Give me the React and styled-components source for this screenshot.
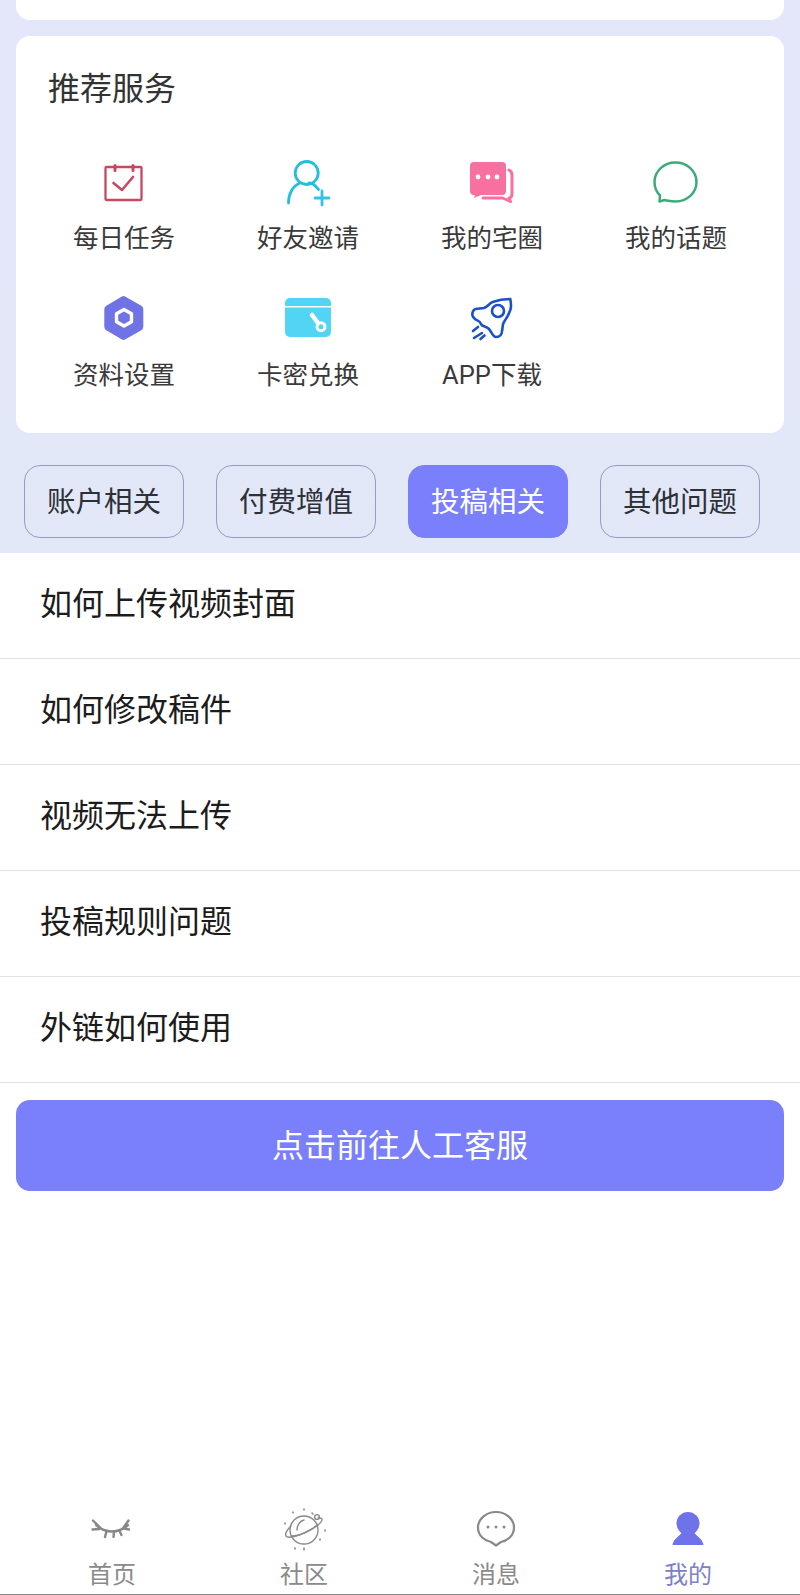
import React from 'react';
import styled, { createGlobalStyle } from 'styled-components';

const Global = createGlobalStyle`
  html, body { margin: 0; padding: 0; background: #fff; }
  * { box-sizing: border-box; }
  body { font-family: Roboto, "Noto Sans CJK SC", "Noto Sans", sans-serif; }
`;
const Page = styled.div`
  width: 800px; height: 1595px; display: flex; flex-direction: column; background: #fff; overflow: hidden;
`;
const Lavender = styled.section`
  background: linear-gradient(180deg, #e4e6fa 0%, #e2e8f7 100%);
  padding: 0 16px 15px; display: flex; flex-direction: column;
`;
const TopCard = styled.div`
  height: 20px; background: #fff; border-radius: 0 0 14px 14px; margin-bottom: 16px;
`;
const Card = styled.div`
  background: #fff; border-radius: 14px; height: 397px; padding: 33px 16px 0;
`;
const CardTitle = styled.h2`
  margin: 0 0 50px 16px; font-size: 32px; line-height: 40px; font-weight: 400; color: #333;
`;
const Grid = styled.div`
  display: grid; grid-template-columns: repeat(4, 184px); row-gap: 36px;
`;
const Service = styled.div`
  display: flex; flex-direction: column; align-items: center;
  gap: ${p => (p.$firstRow ? 13 : 15)}px;
  padding-bottom: ${p => (p.$firstRow ? 2 : 0)}px;
`;
const IconBox = styled.div`
  width: 48px; height: 48px; display: flex; align-items: center; justify-content: center;
`;
const ServiceLabel = styled.span`
  font-size: 25.5px; line-height: 36px; color: #3a3a3a; white-space: nowrap;
`;
const Tabs = styled.div`
  display: flex; gap: 32px; padding: 32px 8px 0;
`;
const Tab = styled.div`
  width: 160px; height: 73px; border-radius: 16px; display: flex; align-items: center; justify-content: center;
  padding-bottom: 5px; font-size: 28.5px; color: ${p => (p.$active ? '#fff' : '#2e3038')};
  background: ${p => (p.$active ? '#7a7ffb' : 'transparent')};
  border: 1.5px solid ${p => (p.$active ? '#7a7ffb' : '#9799c9')};
`;
const List = styled.div`display: flex; flex-direction: column;`;
const Row = styled.div`
  height: 106px; padding: 0 0 10px 40px; display: flex; align-items: center; font-size: 32px; color: #1c1c1c;
  border-bottom: 1px solid #e3e3e6;
`;
const CtaWrap = styled.div`padding: 17px 16px 0; flex: 1;`;
const Cta = styled.div`
  height: 91px; padding-bottom: 5px; background: #7a7ffb; border-radius: 14px; color: #fff; font-size: 32px;
  display: flex; align-items: center; justify-content: center;
`;
const Nav = styled.nav`
  display: grid; grid-template-columns: repeat(4, 192px); padding: 5px 16px 0; height: 95px;
  border-bottom: 1px solid #8a8a8a;
`;
const NavItem = styled.div`
  display: flex; flex-direction: column; align-items: center; gap: 5px;
`;
const NavLabel = styled.span`
  font-size: 24px; line-height: 34px; color: ${p => (p.$active ? '#7c80c8' : '#8a8a8a')};
`;

const Calendar = () => (
  <svg width="48" height="48" viewBox="0 0 48 48" fill="none" stroke="#c9485f" strokeWidth="2.300" strokeLinecap="round" strokeLinejoin="round">
    <path d="M6.500 8h34a1 1 0 0 1 1 1v31a1 1 0 0 1-1 1h-34a1 1 0 0 1-1-1V9a1 1 0 0 1 1-1z" />
    <path d="M15 6.500v5M33 6.500v5" strokeWidth="3" />
    <path d="M13.500 24l8.500 7 11-13" strokeWidth="2.600" />
  </svg>
);
const UserPlus = () => (
  <svg width="48" height="48" viewBox="0 0 48 48" fill="none" stroke="#22bfdc" strokeWidth="2.800" strokeLinecap="round">
    <circle cx="22.700" cy="14" r="11.500" />
    <path d="M4.500 44c0-9 4-17 11.500-20M25 24c4 0 7 3 9.500 6.500" />
    <path d="M31 39h14M38 32v14" stroke="#35c2e8" />
  </svg>
);
const Chats = () => (
  <svg width="48" height="48" viewBox="0 0 48 48">
    <path d="M6 3h28a4 4 0 0 1 4 4v25a4 4 0 0 1-4 4H13l-7 3 1-3H6a4 4 0 0 1-4-4V7a4 4 0 0 1 4-4z" fill="#f7709f" />
    <path d="M41 11c2 1 3 2 3 5v18c0 3-1 5-3 5l1.500 3.500-8-3.500H15" fill="none" stroke="#f7709f" strokeWidth="3" strokeLinejoin="round" strokeLinecap="round" />
    <circle cx="10" cy="18" r="2.400" fill="#fff" /><circle cx="20" cy="18" r="2.400" fill="#fff" /><circle cx="29" cy="18" r="2.400" fill="#fff" />
  </svg>
);
const Bubble = () => (
  <svg width="48" height="48" viewBox="0 0 48 48" fill="none" stroke="#3dab78" strokeWidth="2.500" strokeLinejoin="round">
    <path d="M23.500 3.500C35 3.500 44.500 12 44.500 23S35 42.500 23.500 42.500c-4 0-8-1-11-1.500l-5 1.500.5-6C4.500 33 2.500 28.500 2.500 23 2.500 12 12 3.500 23.500 3.500z" />
  </svg>
);
const Hex = () => (
  <svg width="48" height="48" viewBox="0 0 48 48">
    <path d="M21.500 2.700a4 4 0 0 1 4 0l15.800 9a4 4 0 0 1 2 3.500v17.600a4 4 0 0 1-2 3.500l-15.800 9a4 4 0 0 1-4 0l-15.200-9a4 4 0 0 1-2-3.500V15.200a4 4 0 0 1 2-3.500z" fill="#6f73e6" />
    <path d="M24 15.500l7.500 4.300v7.900L24 32l-7.500-4.300v-7.900z" fill="none" stroke="#fff" strokeWidth="3.400" strokeLinejoin="round" />
  </svg>
);
const KeyCard = () => (
  <svg width="48" height="48" viewBox="0 0 48 48">
    <path d="M1 9a5 5 0 0 1 5-5h36a5 5 0 0 1 5 5v3H1z" fill="#52d4f4" />
    <path d="M1 13.500h46V38a5 5 0 0 1-5 5H6a5 5 0 0 1-5-5z" fill="#52d4f4" />
    <path d="M28 21l6 8" stroke="#fff" strokeWidth="4.500" strokeLinecap="round" />
    <circle cx="37" cy="32.700" r="4" fill="none" stroke="#fff" strokeWidth="3" />
  </svg>
);
const Rocket = () => (
  <svg width="48" height="48" viewBox="0 0 48 48" fill="none" stroke="#1a50c8" strokeWidth="2.600" strokeLinecap="round" strokeLinejoin="round">
    <path d="M42.300 5C36 5 30 6 24.600 8c-3 1-5 5-8.600 6-4 1-9 0-10.500 2.500C4 19 4 22 6 24c2 3 6 2 7 6 1 3 5 2 8 5 2 2 4 8 7 8 4 0 6-3 6-6 1-3 0-6 2-9 3-5 7-10 7-16 0-3-.5-5-.7-7z" />
    <circle cx="30" cy="17" r="6" />
    <path d="M5 37l5-4M6 44l8-5M12.500 45l4-3.500" />
  </svg>
);
const Eye = () => (
  <svg width="48" height="48" viewBox="0 0 48 48" fill="none" stroke="#888" strokeWidth="2.400" strokeLinecap="round">
    <path d="M8 20c5 4.500 10 6.500 16 6.500s11-2 16-6.500" />
    <path d="M5 15.500l7 7M4.500 24.500l7-.5M17 32l1.500-6M25.500 32l.5-5.500M33.500 30l-2.500-5M41 24.500l-5-1M40.500 15.500l-5 7" />
  </svg>
);
const Planet = () => (
  <svg width="48" height="48" viewBox="0 0 48 48" fill="none" stroke="#8a8a8a" strokeWidth="1.400" strokeLinecap="round">
    <circle cx="24" cy="25" r="14" />
    <path d="M11.500 31c8 0 19-5 26-11" />
    <path d="M11 21c-4 4-6 8-5 10 1 2.500 11 1 20-4 9-4 17-10 16-13-.5-1-2-1-4-1" />
    <path d="M17 25c0-5 3-9 7-10" />
    <circle cx="37" cy="12" r="2.400" />
    <path d="M13 7v1M24 4v1M32 8l1 1M5 18v1M45 25v1M40 34v1M15 43v1M24 43v2" strokeWidth="1.600" />
  </svg>
);
const MessageDots = () => (
  <svg width="48" height="48" viewBox="0 0 48 48" fill="none" stroke="#8a8a8a" strokeWidth="2.200" strokeLinejoin="round">
    <path d="M24 7c10 0 18 7 18 15.500S35 36 29 37l-5 3.500-5-3.500C13 36 6 31 6 22.500S14 7 24 7z" />
    <circle cx="16" cy="22" r="1.500" fill="#8a8a8a" stroke="none" /><circle cx="24" cy="22" r="1.500" fill="#8a8a8a" stroke="none" /><circle cx="32" cy="22" r="1.500" fill="#8a8a8a" stroke="none" />
  </svg>
);
const Person = () => (
  <svg width="48" height="48" viewBox="0 0 48 48" fill="#6f73ea">
    <circle cx="24" cy="18.500" r="11.500" />
    <path d="M18 27h12c2 4 9 7 9.500 13h-31C9 34 16 31 18 27z" />
  </svg>
);

const services = [
  ['每日任务', Calendar], ['好友邀请', UserPlus], ['我的宅圈', Chats], ['我的话题', Bubble],
  ['资料设置', Hex], ['卡密兑换', KeyCard], ['APP下载', Rocket],
];
const tabs = ['账户相关', '付费增值', '投稿相关', '其他问题'];
const rows = ['如何上传视频封面', '如何修改稿件', '视频无法上传', '投稿规则问题', '外链如何使用'];
const nav = [['首页', Eye], ['社区', Planet], ['消息', MessageDots], ['我的', Person]];

export default function App() {
  return (
    <Page>
      <Global />
      <Lavender>
        <TopCard />
        <Card>
          <CardTitle>推荐服务</CardTitle>
          <Grid>
            {services.map(([label, Icon], i) => (
              <Service key={label} $firstRow={i < 4}>
                <IconBox><Icon /></IconBox>
                <ServiceLabel>{label}</ServiceLabel>
              </Service>
            ))}
          </Grid>
        </Card>
        <Tabs>
          {tabs.map(t => <Tab key={t} $active={t === '投稿相关'}>{t}</Tab>)}
        </Tabs>
      </Lavender>
      <List>
        {rows.map(r => <Row key={r}>{r}</Row>)}
      </List>
      <CtaWrap><Cta>点击前往人工客服</Cta></CtaWrap>
      <Nav>
        {nav.map(([label, Icon], i) => (
          <NavItem key={label}>
            <IconBox><Icon /></IconBox>
            <NavLabel $active={i === 3}>{label}</NavLabel>
          </NavItem>
        ))}
      </Nav>
    </Page>
  );
}
